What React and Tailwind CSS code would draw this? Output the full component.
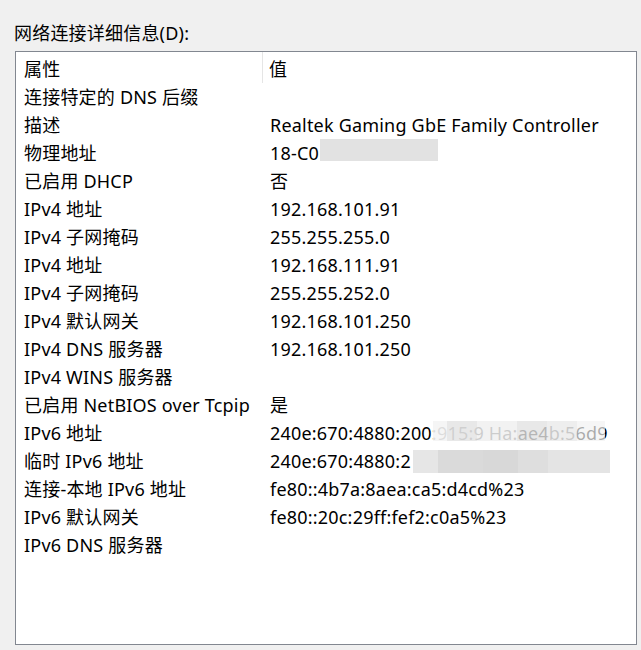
import React from "react";

const rows = [
  ["连接特定的 DNS 后缀", ""],
  ["描述", "Realtek Gaming GbE Family Controller"],
  ["物理地址", "18-C0", "mac"],
  ["已启用 DHCP", "否"],
  ["IPv4 地址", "192.168.101.91"],
  ["IPv4 子网掩码", "255.255.255.0"],
  ["IPv4 地址", "192.168.111.91"],
  ["IPv4 子网掩码", "255.255.252.0"],
  ["IPv4 默认网关", "192.168.101.250"],
  ["IPv4 DNS 服务器", "192.168.101.250"],
  ["IPv4 WINS 服务器", ""],
  ["已启用 NetBIOS over Tcpip", "是"],
  ["IPv6 地址", "240e:670:4880:200:915:9 Ha:ae4b:56d9", "v6a"],
  ["临时 IPv6 地址", "240e:670:4880:2", "v6b"],
  ["连接-本地 IPv6 地址", "fe80::4b7a:8aea:ca5:d4cd%23"],
  ["IPv6 默认网关", "fe80::20c:29ff:fef2:c0a5%23"],
  ["IPv6 DNS 服务器", ""],
];

function Blur({ kind }) {
  if (kind === "mac")
    return <span className="absolute left-[57px] top-[0px] h-[22px] w-[118px] bg-[#e2e2e2]" />;
  if (kind === "v6a")
    return (
      <span className="absolute left-[170px] top-[2px] flex h-[20px] w-[172px]">
        <span className="h-full w-[14px] bg-[#f4f4f4]/90" />
        <span className="h-full w-[30px] bg-[#e6e6e6]/90" />
        <span className="h-full w-[40px] bg-[#f0f0f0]/85" />
        <span className="h-full w-[30px] bg-[#e2e2e2]/80" />
        <span className="h-full w-[30px] bg-[#ebebeb]/85" />
        <span className="h-full w-[28px] bg-[#f2f2f2]/70" />
      </span>
    );
  if (kind === "v6b")
    return (
      <span className="absolute left-[150px] top-[3px] flex h-[23px] w-[197px]">
        <span className="h-full w-[25px] bg-[#e6e6e6]" />
        <span className="h-full w-[45px] bg-[#dadada]" />
        <span className="h-full w-[35px] bg-[#d8d8d8]" />
        <span className="h-full w-[30px] bg-[#dedede]" />
        <span className="h-full w-[62px] bg-[#e4e4e4]" />
      </span>
    );
  return null;
}

export default function App() {
  return (
    <div
      className="h-[650px] w-[641px] overflow-hidden bg-[#f0f0f0] text-[18px] tracking-[0.2px] text-black"
      style={{ fontFamily: '"Noto Sans", "Noto Sans CJK SC", sans-serif' }}
    >
      <div className="pl-[14px] pt-[21px] leading-[24px]">网络连接详细信息(D):</div>
      <div className="ml-[15px] mt-[6px] h-[594px] w-[622px] border border-[#828790] bg-white">
        <div className="flex h-[31px] items-end">
          <div className="flex h-full w-[247px] items-center border-r border-[#e5e5e5] pl-[8px] pt-[3px]">属性</div>
          <div className="flex h-full items-center pl-[6px] pt-[3px]">值</div>
        </div>
        {rows.map(([k, v, blur], i) => (
          <div key={i} className="flex h-[28px] items-center">
            <div className="w-[247px] whitespace-nowrap pl-[8px] leading-[28px]">{k}</div>
            <div className="relative h-full flex-1 whitespace-nowrap pl-[7px] leading-[28px]">
              {v}
              {blur && <Blur kind={blur} />}
            </div>
          </div>
        ))}
      </div>
    </div>
  );
}
